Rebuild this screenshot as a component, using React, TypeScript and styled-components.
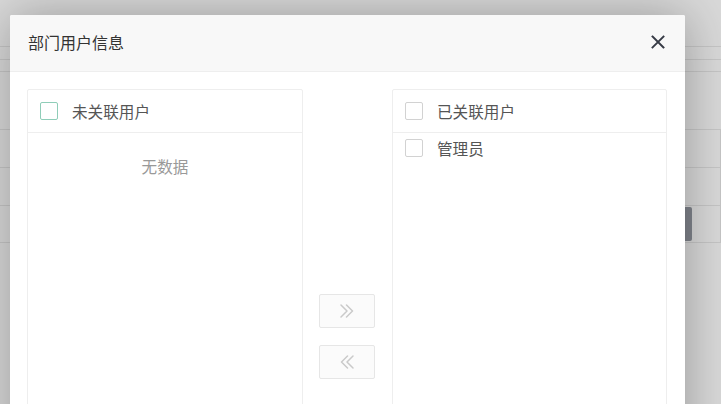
import React from 'react'
import styled, { createGlobalStyle } from 'styled-components'

const GlobalStyle = createGlobalStyle`
  html, body {
    margin: 0;
    padding: 0;
    width: 721px;
    height: 404px;
    overflow: hidden;
    font-family: "Noto Sans CJK SC", "Noto Sans", sans-serif;
  }
`

const Screen = styled.div`
  position: relative;
  width: 721px;
  height: 404px;
  overflow: hidden;
  background: #d9d9d9;
`

// dimmed page behind the dialog
const PageBg = styled.div`
  display: flex;
  flex-direction: column;
  padding-top: 46px;
`

const Rule = styled.div<{ h: number }>`
  height: ${({ h }) => h}px;
  border-top: 1px solid #c6c6c6;
  box-sizing: border-box;
`

const TableRow = styled.div<{ last?: boolean }>`
  height: 38px;
  box-sizing: border-box;
  border-top: 1px solid #c6c6c6;
  border-right: 1px solid #c6c6c6;
  border-bottom: ${({ last }) => (last ? '1px solid #c6c6c6' : 'none')};
  display: flex;
  align-items: center;
  justify-content: flex-end;
  padding-right: 28px;
`

const GhostButton = styled.div`
  width: 40px;
  height: 34px;
  border-radius: 2px;
  background: #80848c;
`

const Dialog = styled.div`
  position: absolute;
  left: 10px;
  top: 15px;
  width: 675px;
  height: 600px;
  background: #fff;
  border-radius: 2px;
  box-shadow: 1px 1px 50px rgba(0, 0, 0, 0.3);
  display: flex;
  flex-direction: column;
`

const DialogHeader = styled.div`
  height: 56px;
  flex: none;
  background: #f8f8f8;
  border-bottom: 1px solid #eee;
  border-radius: 2px 2px 0 0;
  display: flex;
  align-items: center;
  justify-content: space-between;
  padding: 0 20px 0 18px;
`

const Title = styled.div`
  font-size: 16px;
  color: #333;
  margin-top: -2px;
`

const CloseBtn = styled.div`
  width: 14px;
  height: 14px;
  margin-top: -3px;
  display: flex;
`

const DialogBody = styled.div`
  display: flex;
  align-items: flex-start;
  padding: 17px 18px 0 17px;
`

const Panel = styled.div<{ w: number }>`
  width: ${({ w }) => w}px;
  height: 495px;
  box-sizing: border-box;
  border: 1px solid #eee;
  border-radius: 2px;
  flex: none;
`

const PanelHead = styled.div`
  height: 43px;
  box-sizing: border-box;
  border-bottom: 1px solid #eee;
  display: flex;
  align-items: center;
  padding-left: 12px;
`

const Check = styled.span<{ active?: boolean }>`
  width: 18px;
  height: 18px;
  box-sizing: border-box;
  border: 1px solid ${({ active }) => (active ? '#8fcdb8' : '#d2d2d2')};
  border-radius: 2px;
  background: #fff;
  flex: none;
`

const Label = styled.span`
  margin-left: 14px;
  font-size: 15.6px;
  color: #555;
  line-height: 20px;
`

const DataList = styled.div`
  padding-top: 0;
`

const Item = styled.div`
  height: 30px;
  display: flex;
  align-items: center;
  padding-left: 12px;
`

const Empty = styled.div`
  padding-top: 22px;
  line-height: 22px;
  text-align: center;
  font-size: 15.6px;
  color: #999;
`

const Actions = styled.div`
  width: 56px;
  margin: 0 17px 0 16px;
  align-self: center;
  display: flex;
  flex-direction: column;
  gap: 17px;
  flex: none;
`

const MoveBtn = styled.div`
  height: 34px;
  box-sizing: border-box;
  border: 1px solid #e6e6e6;
  border-radius: 2px;
  background: #fbfbfb;
  display: flex;
  align-items: center;
  justify-content: center;
`

const Chevrons = ({ dir }: { dir: 'right' | 'left' }) => (
  <svg width="16" height="14" viewBox="0 0 16 14" fill="none">
    <g
      stroke="#cacaca"
      strokeWidth="1.5"
      strokeLinecap="round"
      strokeLinejoin="round"
      transform={dir === 'left' ? 'translate(16 0) scale(-1 1)' : undefined}
    >
      <path d="M2 1 L8 7 L2 13" />
      <path d="M7.5 1 L13.5 7 L7.5 13" />
    </g>
  </svg>
)

const App = () => (
  <Screen>
    <GlobalStyle />
    <PageBg>
      <Rule h={13} />
      <Rule h={12} />
      <Rule h={58} />
      <TableRow />
      <TableRow />
      <TableRow last>
        <GhostButton />
      </TableRow>
    </PageBg>

    <Dialog>
      <DialogHeader>
        <Title>部门用户信息</Title>
        <CloseBtn>
          <svg width="14" height="14" viewBox="0 0 14 14">
            <path d="M1.5 1.5 L12.5 12.5 M12.5 1.5 L1.5 12.5" stroke="#363a45" strokeWidth="1.9" strokeLinecap="square" />
          </svg>
        </CloseBtn>
      </DialogHeader>
      <DialogBody>
        <Panel w={276}>
          <PanelHead>
            <Check active />
            <Label>未关联用户</Label>
          </PanelHead>
          <Empty>无数据</Empty>
        </Panel>
        <Actions>
          <MoveBtn>
            <Chevrons dir="right" />
          </MoveBtn>
          <MoveBtn>
            <Chevrons dir="left" />
          </MoveBtn>
        </Actions>
        <Panel w={275}>
          <PanelHead>
            <Check />
            <Label>已关联用户</Label>
          </PanelHead>
          <DataList>
            <Item>
              <Check />
              <Label>管理员</Label>
            </Item>
          </DataList>
        </Panel>
      </DialogBody>
    </Dialog>
  </Screen>
)

export default App
